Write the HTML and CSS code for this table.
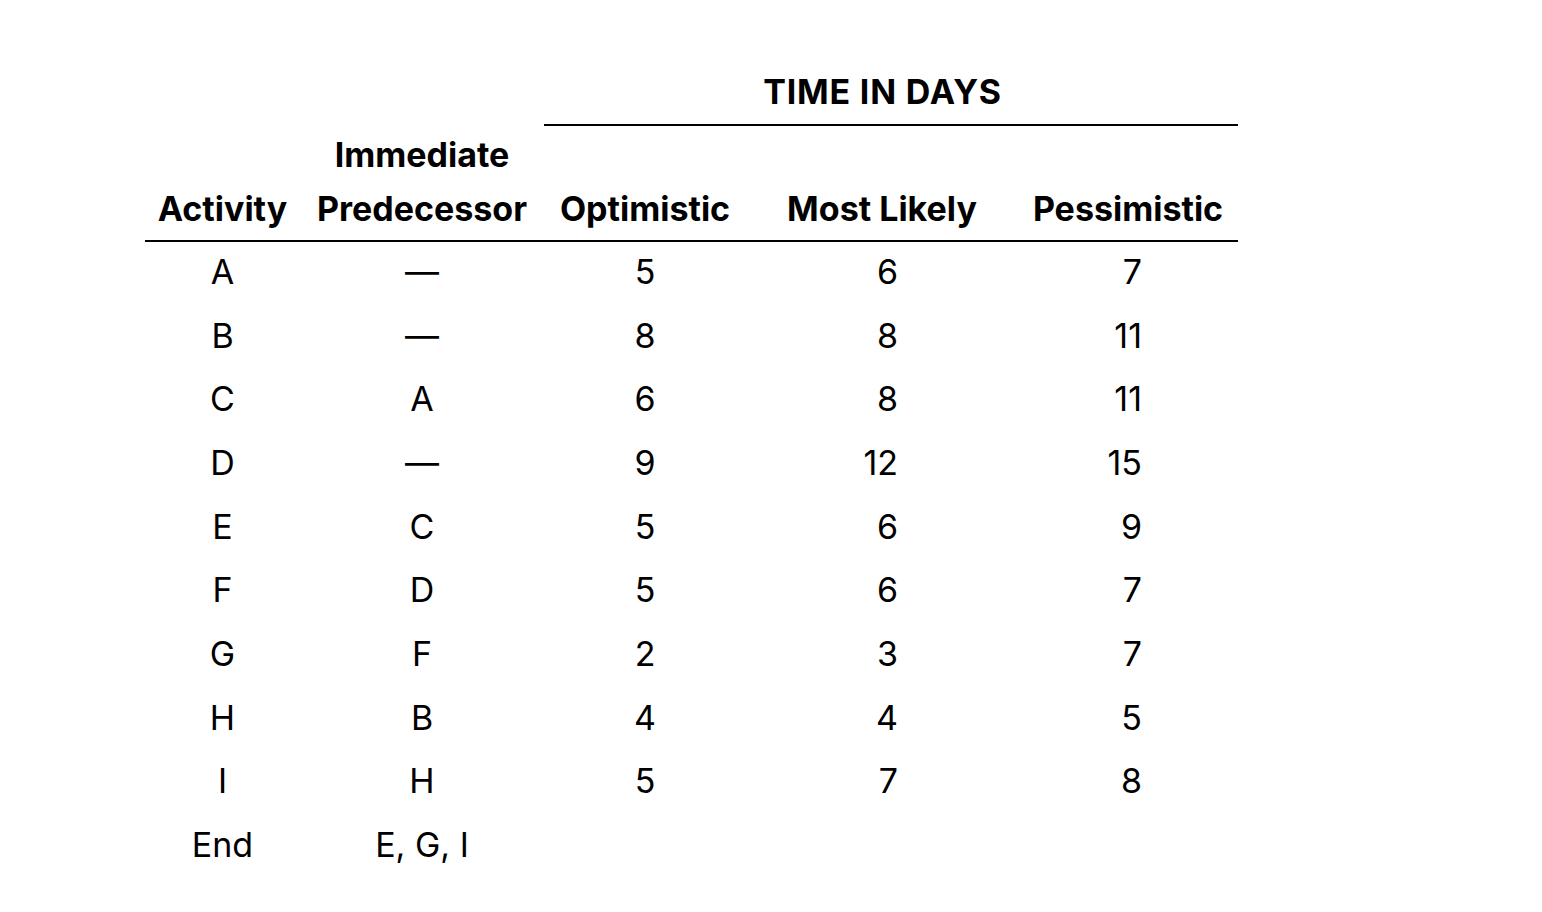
FILE: index.html
```html
<!DOCTYPE html>
<html lang="en">
<head>
<meta charset="utf-8">
<title>Activity times</title>
<link rel="stylesheet" href="styles.css">
</head>
<body>
<table class="times">
  <colgroup>
    <col class="c-act">
    <col class="c-pred">
    <col class="c-opt">
    <col class="c-ml">
    <col class="c-pes">
  </colgroup>
  <thead>
    <tr class="group-row">
      <th></th>
      <th></th>
      <th colspan="3" class="group">TIME IN DAYS</th>
    </tr>
    <tr class="head-row">
      <th>Activity</th>
      <th>Immediate<br>Predecessor</th>
      <th>Optimistic</th>
      <th>Most Likely</th>
      <th>Pessimistic</th>
    </tr>
  </thead>
  <tbody>
    <tr><td>A</td><td>—</td><td>5</td><td class="num ml">6</td><td class="num pes">7</td></tr>
    <tr><td>B</td><td>—</td><td>8</td><td class="num ml">8</td><td class="num pes">11</td></tr>
    <tr><td>C</td><td>A</td><td>6</td><td class="num ml">8</td><td class="num pes">11</td></tr>
    <tr><td>D</td><td>—</td><td>9</td><td class="num ml">12</td><td class="num pes">15</td></tr>
    <tr><td>E</td><td>C</td><td>5</td><td class="num ml">6</td><td class="num pes">9</td></tr>
    <tr><td>F</td><td>D</td><td>5</td><td class="num ml">6</td><td class="num pes">7</td></tr>
    <tr><td>G</td><td>F</td><td>2</td><td class="num ml">3</td><td class="num pes">7</td></tr>
    <tr><td>H</td><td>B</td><td>4</td><td class="num ml">4</td><td class="num pes">5</td></tr>
    <tr><td>I</td><td>H</td><td>5</td><td class="num ml">7</td><td class="num pes">8</td></tr>
    <tr><td>End</td><td>E, G, I</td><td></td><td class="num ml"></td><td class="num pes"></td></tr>
  </tbody>
</table>
</body>
</html>
```
FILE: styles.css
```css
html, body {
  margin: 0;
  padding: 0;
  background: #ffffff;
}
body {
  font-family: "Inter", "Lato", "Liberation Sans", sans-serif;
  color: #000000;
}
.times {
  border-collapse: collapse;
  table-layout: fixed;
  width: 1093px;
  margin: 70px 0 0 145px;
  font-size: 34px;
}
.c-act { width: 155px; }
.c-pred { width: 244px; }
.c-opt { width: 202px; }
.c-ml { width: 272px; }
.c-pes { width: 220px; }

.times th,
.times td {
  padding: 0;
  text-align: center;
}
.times th {
  font-weight: 700;
  vertical-align: bottom;
}
.group-row th {
  height: 44px;
  line-height: 44px;
  padding-bottom: 10px;
}
.times th.group {
  border-bottom: 2px solid #000;
  letter-spacing: 0.8px;
  padding-right: 17px;
}
.head-row th {
  line-height: 54px;
  padding-top: 3px;
  padding-bottom: 4px;
  border-bottom: 2px solid #000;
}
.times td {
  font-weight: 400;
  height: 56px;
  line-height: 56px;
  padding-top: 2px;
  padding-bottom: 5.67px;
  vertical-align: middle;
}
.times td.num { text-align: right; }
.times td.ml { padding-right: 120px; }
.times td.pes { padding-right: 96px; }
```
